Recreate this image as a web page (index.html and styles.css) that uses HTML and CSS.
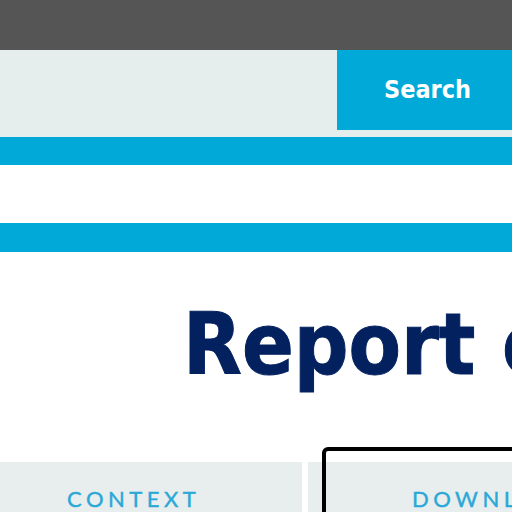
FILE: index.html
```html
<!DOCTYPE html>
<html>
<head>
<meta charset="utf-8">
<link rel="stylesheet" href="styles.css">
</head>
<body>
<div class="topbar"></div>
<div class="searchrow">
  <div class="searchfield"></div>
  <button class="searchbtn">Search</button>
</div>
<div class="bluebar"></div>
<div class="whitegap"></div>
<div class="bluebar second"></div>
<h1 class="title">Report on the findings</h1>
<div class="tabs">
  <div class="tab first"><span class="tablabel">CONTEXT</span></div>
  <div class="tab focused"><span class="tablabel">DOWNLOADS</span></div>
</div>
</body>
</html>
```

FILE: styles.css
```css
html, body {
  margin: 0;
  padding: 0;
  background: #ffffff;
  overflow: hidden;
  width: 512px;
  height: 512px;
}
.topbar {
  height: 50px;
  background: #555555;
}
.searchrow {
  height: 87px;
  background: #e6eded;
  display: flex;
  align-items: flex-start;
}
.searchfield {
  flex: 1;
}
.searchbtn {
  width: 175px;
  height: 80px;
  border: none;
  margin: 0;
  padding: 0 0 1px 6px;
  background: #00a9d7;
  color: #ffffff;
  font-family: "DejaVu Sans Condensed", "DejaVu Sans", sans-serif;
  font-weight: bold;
  font-size: 25px;
}
.bluebar {
  height: 28px;
  background: #00a9d7;
}
.bluebar.second {
  height: 29px;
}
.whitegap {
  height: 58px;
  background: #ffffff;
}
.title {
  margin: 43px 0 0 183px;
  white-space: nowrap;
  font-family: "DejaVu Sans Condensed", "DejaVu Sans", sans-serif;
  font-weight: bold;
  font-size: 85px;
  line-height: 100px;
  color: #03215f;
  -webkit-text-stroke: 1px #03215f;
}
.tabs {
  margin-top: 67px;
  display: flex;
  gap: 6px;
  height: 60px;
}
.tab {
  background: #e8eded;
  display: flex;
  align-items: flex-start;
  position: relative;
}
.tab.first {
  width: 302px;
  flex: none;
  padding-left: 67px;
  box-sizing: border-box;
}
.tab.focused {
  flex: 1;
  padding-left: 104px;
}
.tab.focused::before {
  content: "";
  position: absolute;
  top: -15px;
  left: 14px;
  right: -30px;
  bottom: -30px;
  border: 4px solid #000000;
  border-radius: 6px;
  background: linear-gradient(#ffffff 0, #ffffff 11px, transparent 11px);
}
.tablabel {
  position: relative;
  margin-top: 23px;
  font-family: "Lato", sans-serif;
  font-size: 22px;
  letter-spacing: 4.5px;
  color: #2aa8d8;
  -webkit-text-stroke: 0.4px #2aa8d8;
}
```
